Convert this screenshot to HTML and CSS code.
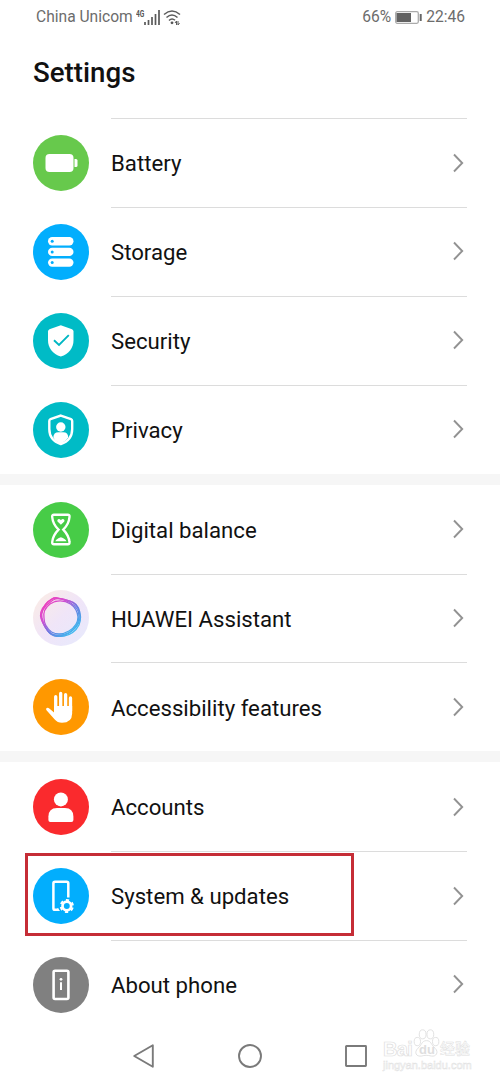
FILE: index.html
```html
<!DOCTYPE html>
<html lang="en">
<head>
<meta charset="utf-8">
<title>Settings</title>
<link rel="stylesheet" href="styles.css">
</head>
<body>
<div class="screen">
  <header class="status">
    <div class="status-left">
      <span class="carrier">China Unicom</span>
      <span class="net">4G</span>
      <svg class="signal" width="16" height="15" viewBox="0 0 16 15"><path d="M1 12v3M4.500 10v5M8 7v8M11.500 4v11M15 0v15" stroke="#5a5a5a" stroke-width="1.700"/></svg>
      <svg class="wifi" width="18" height="15" viewBox="0 0 18 15" fill="none" stroke="#5c5c5c" stroke-width="1.500"><path d="M1 4.500Q9-2.500 17 4.500M3.500 7.500Q9 2.500 14.500 7.500M6 10.500Q9 7.500 12 10.300"/><circle cx="9" cy="12.800" r="1.400" fill="#555" stroke="none"/><path d="M12 13l1.500-2v4M16.500 13l-1.500 2v-4" stroke-width="1"/></svg>
    </div>
    <div class="status-right">
      <span>66%</span>
      <svg class="batt" width="27" height="13" viewBox="0 0 27 13"><rect x=".7" y=".7" width="22.600" height="11.600" rx="1.500" fill="#fff" stroke="#aaa" stroke-width="1.300"/><rect x="1.500" y="2" width="14.500" height="9" fill="#626262"/><path d="M25.700 3v7" stroke="#666" stroke-width="2"/></svg>
      <span>22:46</span>
    </div>
  </header>
  <h1 class="title">Settings</h1>
  <main>
    <section class="group lined">
      <div class="row">
        <svg class="icon green" viewBox="0 0 56 56"><rect x="12.500" y="19" width="28" height="18" rx="4" fill="#fff"/><path d="M41.500 24h1.500q1.500 0 1.500 1.500v5q0 1.500-1.500 1.500h-1.500z" fill="#fff"/></svg>
        <div class="body"><span class="label">Battery</span><svg class="chev" viewBox="0 0 12 20"><path d="M2 1.500L10.200 10 2 18.500"/></svg></div>
      </div>
      <div class="row">
        <svg class="icon blue" viewBox="0 0 56 56"><g fill="#fff"><rect x="15" y="13" width="25.500" height="8.400" rx="4.200"/><rect x="15" y="23.700" width="25.500" height="8.400" rx="4.200"/><rect x="15" y="34.400" width="25.500" height="8.400" rx="4.200"/></g><g fill="#02aefd"><circle cx="19.200" cy="17.200" r="1.500"/><circle cx="19.200" cy="27.900" r="1.500"/><circle cx="19.200" cy="38.600" r="1.500"/></g></svg>
        <div class="body"><span class="label">Storage</span><svg class="chev" viewBox="0 0 12 20"><path d="M2 1.500L10.200 10 2 18.500"/></svg></div>
      </div>
      <div class="row">
        <svg class="icon teal" viewBox="0 0 56 56"><path d="M27.800 12.300L39 16.300Q40.500 17 40.500 18.500V27C40.500 35 36 41 27.800 43.500 19.500 41 15 35 15 27V18.500Q15 17 16.500 16.300z" fill="#fff"/><path d="M21 27.300l5 4.700 9.800-9.800" fill="none" stroke="#00b7c3" stroke-width="1.900"/></svg>
        <div class="body"><span class="label">Security</span><svg class="chev" viewBox="0 0 12 20"><path d="M2 1.500L10.200 10 2 18.500"/></svg></div>
      </div>
      <div class="row">
        <svg class="icon teal" viewBox="0 0 56 56"><path d="M27.800 13.600L38 17.200Q39.200 17.700 39.200 19V27C39.200 34.500 35 39.700 27.800 42 20.500 39.700 16.300 34.500 16.300 27V19Q16.300 17.700 17.500 17.200z" fill="none" stroke="#fff" stroke-width="2.400"/><circle cx="27.800" cy="25" r="4.700" fill="#fff"/><path d="M20.300 35.500Q20.500 30.300 25.500 30.300H30.300Q35 30.300 35.300 35.500Q32 40 27.800 41.500 23 40 20.300 35.500z" fill="#fff"/></svg>
        <div class="body"><span class="label">Privacy</span><svg class="chev" viewBox="0 0 12 20"><path d="M2 1.500L10.200 10 2 18.500"/></svg></div>
      </div>
    </section>
    <section class="group">
      <div class="row">
        <svg class="icon green2" viewBox="0 0 56 56"><path d="M21 12.800H34.800Q36.800 12.800 36.500 15C36 21 33.500 24.500 30.300 27.600 33.500 31 36 34 36.500 40Q36.800 42.300 34.800 42.300H21Q19 42.300 19.200 40C19.700 34 22.200 31 25.500 27.600 22.200 24.500 19.700 21 19.200 15Q19 12.800 21 12.800z" fill="none" stroke="#fff" stroke-width="2.400"/><path d="M27.900 22.800L24.500 19.500Q23.600 17.500 25.600 17 27 16.900 27.900 18.200 28.800 16.900 30.200 17 32.200 17.500 31.300 19.500zM22.300 39.200Q23.500 36.500 27.900 35.200 32.300 36.500 33.500 39.200z" fill="#fff"/></svg>
        <div class="body"><span class="label">Digital balance</span><svg class="chev" viewBox="0 0 12 20"><path d="M2 1.500L10.200 10 2 18.500"/></svg></div>
      </div>
      <div class="row">
        <svg class="icon assistant" viewBox="0 0 56 56"><defs><linearGradient id="ring" gradientUnits="userSpaceOnUse" x1="12" y1="12" x2="40" y2="42"><stop offset="0" stop-color="#ee3fbd"/><stop offset=".3" stop-color="#d04fd2"/><stop offset=".6" stop-color="#6a78e0"/><stop offset="1" stop-color="#3fb8ee"/></linearGradient></defs><g fill="none" stroke="url(#ring)" stroke-width="1.300"><path d="M18 9.500C22 6.500 26 8 31 9.500 37 11 43 12 45.500 18 48 24 48 30 46 35 43 41 37 45.500 31 46 25 46.500 19 47 15.500 42 12 37 8 31 7.500 26 7 21 11 15 18 9.500z"/><path d="M20 10C25 7 32 9 38 11.500 44 14 46 19 47 25 47.500 32 44 37 39 41 34 45 27 46.500 21 45.500 15 43.500 12 38 9.500 32 7 26 9 20 13 15.500z"/><path d="M21 8C27 8 32 10 37 12.500 43 16 46 20 46 26 46 33 42 39 36 42.500 30 45.500 23 46 18 43.500 13 40 10.500 34 9 28 7.500 22 11 15 15 11.500z"/><path d="M22 11.500C28 10 33 11 37.500 14 42 17 44.500 22 45 27 45 34 41 38 36 41 30 44.500 24 45 18.500 42 14 38.500 11 34 11 28 10 22 13 17 17 14z"/></g></svg>
        <div class="body"><span class="label">HUAWEI Assistant</span><svg class="chev" viewBox="0 0 12 20"><path d="M2 1.500L10.200 10 2 18.500"/></svg></div>
      </div>
      <div class="row">
        <svg class="icon orange" viewBox="0 0 56 56"><path d="M22.700 33V17.700M27.700 29V14.400M32.600 29V15.700M37.500 32V19" stroke="#fff" stroke-width="3.300" stroke-linecap="round"/><path d="M21.050 27H39.150V34.500Q39 43.800 29 43.800 24.500 43.800 21.500 40.200L13.300 31Q12.600 29.700 13.800 29 15 28.400 16.300 29.400L21.050 33.500z" fill="#fff"/></svg>
        <div class="body"><span class="label">Accessibility features</span><svg class="chev" viewBox="0 0 12 20"><path d="M2 1.500L10.200 10 2 18.500"/></svg></div>
      </div>
    </section>
    <section class="group">
      <div class="row">
        <svg class="icon red" viewBox="0 0 56 56"><circle cx="27.900" cy="20.400" r="7" fill="#fff"/><path d="M15.400 41V37.500Q15.500 28.900 24 28.900H32Q40.300 28.900 40.400 37.500V41Q40.400 43 38.400 43H17.400Q15.400 43 15.400 41z" fill="#fff"/></svg>
        <div class="body"><span class="label">Accounts</span><svg class="chev" viewBox="0 0 12 20"><path d="M2 1.500L10.200 10 2 18.500"/></svg></div>
      </div>
      <div class="row marked">
        <svg class="icon blue" viewBox="0 0 56 56"><path d="M25.800 41.800H22Q20.400 41.800 20.400 40.200V15.400Q20.400 13.800 22 13.800H33.700Q35.300 13.800 35.300 15.400V29.500" fill="none" stroke="#fff" stroke-width="2.500"/><path d="M24 40l3.200 3H24z" fill="#fff"/><circle cx="33.800" cy="38" r="4.300" fill="none" stroke="#fff" stroke-width="2.700"/><circle cx="33.800" cy="38" r="6.100" fill="none" stroke="#fff" stroke-width="2" stroke-dasharray="3.200 3.188" stroke-dashoffset="-1.600"/></svg>
        <div class="body"><span class="label">System &amp; updates</span><svg class="chev" viewBox="0 0 12 20"><path d="M2 1.500L10.200 10 2 18.500"/></svg></div>
      </div>
      <div class="row">
        <svg class="icon gray" viewBox="0 0 56 56"><rect x="20.600" y="13.700" width="14.800" height="28.300" rx="1.500" fill="none" stroke="#fff" stroke-width="2.600"/><circle cx="28" cy="22.300" r="1.400" fill="#fff"/><path d="M28 25.300V33" stroke="#fff" stroke-width="2"/></svg>
        <div class="body"><span class="label">About phone</span><svg class="chev" viewBox="0 0 12 20"><path d="M2 1.500L10.200 10 2 18.500"/></svg></div>
      </div>
    </section>
  </main>
  <nav class="nav">
    <svg viewBox="0 0 26 26"><path d="M21.800 2.300V23.700L3.200 13z"/></svg>
    <svg viewBox="0 0 26 26"><circle cx="13" cy="13" r="11"/></svg>
    <svg viewBox="0 0 26 26"><rect x="3" y="3" width="20" height="20" rx=".5"/></svg>
  </nav>
  <div class="watermark">
    <div class="brand"><span class="bai">Bai</span><span class="paw"><svg viewBox="0 0 28 30"><ellipse cx="4.500" cy="13" rx="3.300" ry="4.300"/><ellipse cx="10" cy="5.500" rx="3.500" ry="4.700"/><ellipse cx="18" cy="5.500" rx="3.500" ry="4.700"/><ellipse cx="23.500" cy="13" rx="3.300" ry="4.300"/><path d="M14 12C19 12 19 17 23 20 27 24 24 29 19 28 15 27 12 27 9 28 3 29 1 24 5 20 9 17 9 12 14 12z"/></svg><span class="du">du</span></span><span class="cjk">经验</span></div>
    <div class="url">jingyan.baidu.com</div>
  </div>
</div>
</body>
</html>
```

FILE: styles.css
```css
body {
  margin: 0;
  background: #fff;
  font-family: Roboto, "Noto Sans CJK SC", sans-serif;
  color: #111;
}
.screen {
  position: relative;
  width: 500px;
  height: 1083px;
  overflow: hidden;
}
.status {
  display: flex;
  justify-content: space-between;
  height: 34px;
  padding: 0 35px 0 36px;
  font-size: 15.6px;
  line-height: 36px;
  color: #6c6c6c;
}
.status-left,
.status-right {
  display: flex;
  align-items: center;
}
.net {
  align-self: flex-start;
  width: 8px;
  margin-left: 3px;
  font-size: 9.5px;
  font-weight: 700;
  line-height: 27px;
  color: #555;
  transform: scaleX(0.7);
  transform-origin: left;
}
.wifi { margin-left: 3px; }
.status-right { gap: 4px; }
.title {
  margin: 0;
  padding: 18px 0 0 33px;
  height: 66.15px;
  font-size: 27.7px;
  font-weight: 500;
  line-height: 41px;
}
.group { border-bottom: 11px solid #f6f6f6; margin-bottom: -0.1px; }
.group:last-child { border-bottom: 0; }
.row {
  position: relative;
  display: flex;
  align-items: center;
  gap: 22px;
  height: 88.9px;
  padding: 0 33px;
}
.icon {
  flex: none;
  width: 56px;
  height: 56px;
  margin-top: 1px;
  border-radius: 50%;
}
.green { background: #67c94c; }
.green2 { background: #47cc47; }
.blue { background: #02aefd; }
.teal { background: #00bbc6; }
.orange { background: #ff9800; }
.red { background: #fa2a2d; }
.gray { background: #808080; }
.assistant { background: linear-gradient(135deg, #fcede3, #f0e5f8 50%, #e6eafd); }
.body {
  flex: 1;
  display: flex;
  align-items: center;
  justify-content: space-between;
  height: 100%;
  box-sizing: border-box;
  border-top: 1px solid transparent;
  font-size: 22.2px;
}
.row + .row .body,
.lined .body { border-top-color: #dcdcdc; }
.label { padding-top: 0.6px; }
.chev {
  width: 12px;
  height: 20px;
  margin: -1px 3px 0 0;
  fill: none;
  stroke: #929292;
  stroke-width: 1.9;
}
.marked::after {
  content: "";
  position: absolute;
  left: 25px;
  top: 1.9px;
  width: 323px;
  height: 77px;
  border: 3px solid #c52d36;
}
.nav {
  display: flex;
  justify-content: center;
  gap: 80px;
  padding-top: 14px;
}
.nav svg {
  width: 26px;
  height: 26px;
  fill: none;
  stroke: #7a7a7a;
  stroke-width: 1.9;
  stroke-linejoin: round;
}
.watermark {
  position: absolute;
  left: 383px;
  top: 1028px;
  color: #fff;
  -webkit-text-stroke: 0.7px #dedede;
}
.brand {
  display: flex;
  align-items: flex-end;
  height: 31px;
}
.bai {
  width: 30px;
  font: 700 20px/20px "Liberation Sans", sans-serif;
  letter-spacing: -0.6px;
}
.paw {
  position: relative;
  width: 27px;
  height: 30px;
}
.paw svg {
  display: block;
  width: 27px;
  height: 29px;
  fill: #fff;
  stroke: #dedede;
  stroke-width: 0.9;
}
.du {
  position: absolute;
  left: 6px;
  top: 13px;
  font: 700 13px/16px "Liberation Sans", sans-serif;
  color: #dedede;
  -webkit-text-stroke: 0;
}
.cjk {
  font: 500 15px/22px "Noto Sans CJK SC", sans-serif;
  -webkit-text-stroke-width: 0.5px;
}
.url {
  font: 11px/12px "Liberation Sans", sans-serif;
  -webkit-text-stroke: 0.5px #e2e2e2;
}
```
